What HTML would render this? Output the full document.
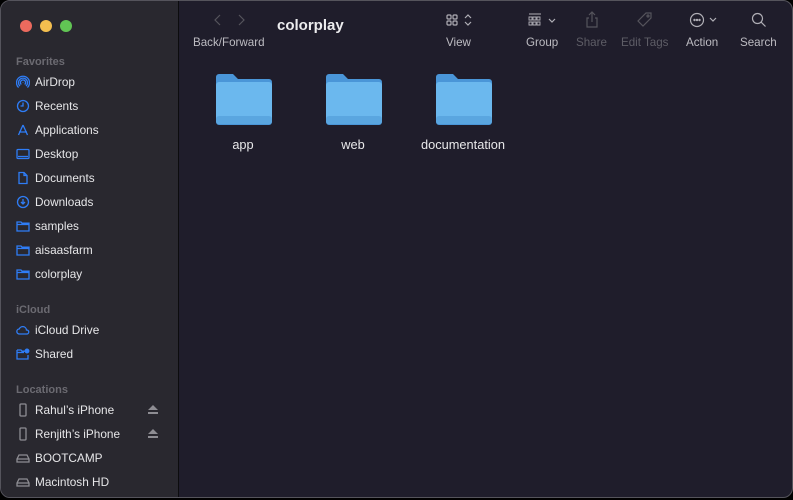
<!DOCTYPE html>
<html><head><meta charset="utf-8"><style>
*{margin:0;padding:0;box-sizing:border-box}
body{width:793px;height:500px;background:#000;overflow:hidden;font-family:"Liberation Sans",sans-serif;-webkit-font-smoothing:antialiased}
.win{position:absolute;left:0;top:0;width:793px;height:498px;border-radius:10px;overflow:hidden;background:#1f1d2b;border:1px solid #55545c}
.side{position:absolute;left:0;top:0;width:178px;height:100%;background:#29282f;border-right:1px solid #0c0c0e}
.dot{position:absolute;top:19px;width:12px;height:12px;border-radius:50%}
.h{position:absolute;left:15px;font-size:11px;font-weight:bold;color:#6b6a71}
.it{position:absolute;left:15px;font-size:11.8px;color:#e6e6e8;height:16px;line-height:16px;display:flex;align-items:center}
.it svg{width:14px;height:14px;margin-right:5px;fill:none;stroke:#2f7df6;stroke-width:1.3}
.it.g svg{stroke:#8e8d93}
.tb{position:absolute;font-size:11.6px;color:#bdbcc2;text-align:center}
.tb.d{color:#5e5d66}
.ic{position:absolute;stroke:#b0afb6;fill:none;stroke-width:1.2}
.f{position:absolute;top:72px;width:60px;height:52px}
.fl{position:absolute;top:136px;font-size:12.8px;color:#e8e8ea;text-align:center;width:110px}
</style></head><body>
<div class="win">
<div class="side">
<div class="dot" style="left:19px;background:#ec6a5e"></div>
<div class="dot" style="left:39px;background:#f4bf4f"></div>
<div class="dot" style="left:59px;background:#61c554"></div>
<div class="h" style="top:55px">Favorites</div>
<div class="it" style="top:73px"><svg viewBox="0 0 14 14"><path d="M4 11a4.5 4.5 0 1 1 6 0M5.3 9.5a2.6 2.6 0 1 1 3.4 0M7 7.5v0.5"/><path d="M2.6 12.5a6.5 6.5 0 1 1 8.8 0"/></svg>AirDrop</div>
<div class="it" style="top:97px"><svg viewBox="0 0 14 14"><circle cx="7" cy="7" r="5.5"/><path d="M7 3.5V7H4.5"/></svg>Recents</div>
<div class="it" style="top:121px"><svg viewBox="0 0 14 14"><path d="M7 2L2.5 12M7 2l4.5 10M3 9h8"/></svg>Applications</div>
<div class="it" style="top:145px"><svg viewBox="0 0 14 14"><rect x="1" y="2.5" width="12" height="9" rx="1"/><path d="M2 9.5h10"/></svg>Desktop</div>
<div class="it" style="top:169px"><svg viewBox="0 0 14 14"><path d="M3 1.5h5l3 3v8H3z M8 1.5v3h3"/></svg>Documents</div>
<div class="it" style="top:193px"><svg viewBox="0 0 14 14"><circle cx="7" cy="7" r="5.5"/><path d="M7 4v5M5 7l2 2 2-2"/></svg>Downloads</div>
<div class="it" style="top:217px"><svg viewBox="0 0 14 14"><path d="M1 3h4l1 1.2h7V12H1z M1 5.5h12"/></svg>samples</div>
<div class="it" style="top:241px"><svg viewBox="0 0 14 14"><path d="M1 3h4l1 1.2h7V12H1z M1 5.5h12"/></svg>aisaasfarm</div>
<div class="it" style="top:265px"><svg viewBox="0 0 14 14"><path d="M1 3h4l1 1.2h7V12H1z M1 5.5h12"/></svg>colorplay</div>
<div class="h" style="top:303px">iCloud</div>
<div class="it" style="top:321px"><svg viewBox="0 0 14 14"><path d="M3.5 11a2.5 2.5 0 0 1-.3-5 3.8 3.8 0 0 1 7.3 1A2 2 0 0 1 11 11z"/></svg>iCloud Drive</div>
<div class="it" style="top:345px"><svg viewBox="0 0 14 14"><path d="M1 3h4l1 1.2h3M1 3v9h11V8 M1 5.5h7"/><circle cx="11" cy="4" r="1.8" fill="#2f7df6"/></svg>Shared</div>
<div class="h" style="top:383px">Locations</div>
<div class="it g" style="top:401px"><svg viewBox="0 0 14 14"><rect x="4" y="1" width="6" height="12" rx="1"/></svg>Rahul’s iPhone</div>
<div class="it g" style="top:425px"><svg viewBox="0 0 14 14"><rect x="4" y="1" width="6" height="12" rx="1"/></svg>Renjith’s iPhone</div>
<svg style="position:absolute;left:146px;top:404px" width="12" height="10"><path d="M6 0L11 5H1z M1 7h10v2H1z" fill="#8e8d93"/></svg>
<svg style="position:absolute;left:146px;top:428px" width="12" height="10"><path d="M6 0L11 5H1z M1 7h10v2H1z" fill="#8e8d93"/></svg>
<div class="it g" style="top:449px"><svg viewBox="0 0 14 14"><path d="M1 8l2-4h8l2 4v3H1z M1 8h12"/></svg>BOOTCAMP</div>
<div class="it g" style="top:473px"><svg viewBox="0 0 14 14"><path d="M1 8l2-4h8l2 4v3H1z M1 8h12"/></svg>Macintosh HD</div>
</div>
<svg class="ic" style="left:210px;top:12px;stroke:#55545c" width="40" height="14"><path d="M9 2L4 7l5 5M28 2l5 5-5 5"/></svg>
<div class="tb" style="left:192px;top:35px">Back/Forward</div>
<div style="position:absolute;left:276px;top:16px;font-size:15px;font-weight:bold;color:#ececee">colorplay</div>
<svg class="ic" style="left:445px;top:12px" width="30" height="16"><rect x="1" y="2" width="4" height="4" rx="1"/><rect x="7" y="2" width="4" height="4" rx="1"/><rect x="1" y="8" width="4" height="4" rx="1"/><rect x="7" y="8" width="4" height="4" rx="1"/><path d="M19 5l3-3 3 3M19 9l3 3 3-3"/></svg>
<div class="tb" style="left:445px;top:35px">View</div>
<svg class="ic" style="left:527px;top:12px" width="32" height="14"><path d="M1 1h12M1 4h3v3H1zM5 4h3v3H5zM9 4h3v3H9zM1 9h3v3H1zM5 9h3v3H5zM9 9h3v3H9z" stroke-width="0.9"/><path d="M21 6l3 3 3-3"/></svg>
<div class="tb" style="left:525px;top:35px">Group</div>
<svg class="ic" style="left:584px;top:10px;stroke:#55545c" width="14" height="18"><path d="M7 1v10M4 4l3-3 3 3M4 7H2v9h10V7h-2"/></svg>
<div class="tb d" style="left:575px;top:35px">Share</div>
<svg class="ic" style="left:635px;top:10px;stroke:#55545c" width="18" height="18"><path d="M10 2h5v5l-8 8-5-5z"/><circle cx="12" cy="5" r="1"/></svg>
<div class="tb d" style="left:620px;top:35px">Edit Tags</div>
<svg class="ic" style="left:688px;top:11px" width="30" height="16"><circle cx="8" cy="8" r="6.5"/><circle cx="5.5" cy="8" r=".6"/><circle cx="8" cy="8" r=".6"/><circle cx="10.5" cy="8" r=".6"/><path d="M21 6l3 3 3-3"/></svg>
<div class="tb" style="left:685px;top:35px">Action</div>
<svg class="ic" style="left:750px;top:11px" width="16" height="16"><circle cx="6.5" cy="6.5" r="5"/><path d="M10 10l4.5 4.5"/></svg>
<div class="tb" style="left:739px;top:35px">Search</div>
<svg class="f" style="left:213px" viewBox="0 0 60 52"><path d="M2 4a3 3 0 0 1 3-3h14l5 5h31a3 3 0 0 1 3 3v40a3 3 0 0 1-3 3H5a3 3 0 0 1-3-3z" fill="#4a96d8"/><rect x="2" y="9" width="56" height="42" rx="3" fill="#6bb8ee"/><rect x="2" y="43" width="56" height="8" rx="3" fill="#5aa6e0"/></svg>
<svg class="f" style="left:323px" viewBox="0 0 60 52"><path d="M2 4a3 3 0 0 1 3-3h14l5 5h31a3 3 0 0 1 3 3v40a3 3 0 0 1-3 3H5a3 3 0 0 1-3-3z" fill="#4a96d8"/><rect x="2" y="9" width="56" height="42" rx="3" fill="#6bb8ee"/><rect x="2" y="43" width="56" height="8" rx="3" fill="#5aa6e0"/></svg>
<svg class="f" style="left:433px" viewBox="0 0 60 52"><path d="M2 4a3 3 0 0 1 3-3h14l5 5h31a3 3 0 0 1 3 3v40a3 3 0 0 1-3 3H5a3 3 0 0 1-3-3z" fill="#4a96d8"/><rect x="2" y="9" width="56" height="42" rx="3" fill="#6bb8ee"/><rect x="2" y="43" width="56" height="8" rx="3" fill="#5aa6e0"/></svg>
<div class="fl" style="left:187px">app</div>
<div class="fl" style="left:297px">web</div>
<div class="fl" style="left:407px">documentation</div>
</div>
</body></html>
